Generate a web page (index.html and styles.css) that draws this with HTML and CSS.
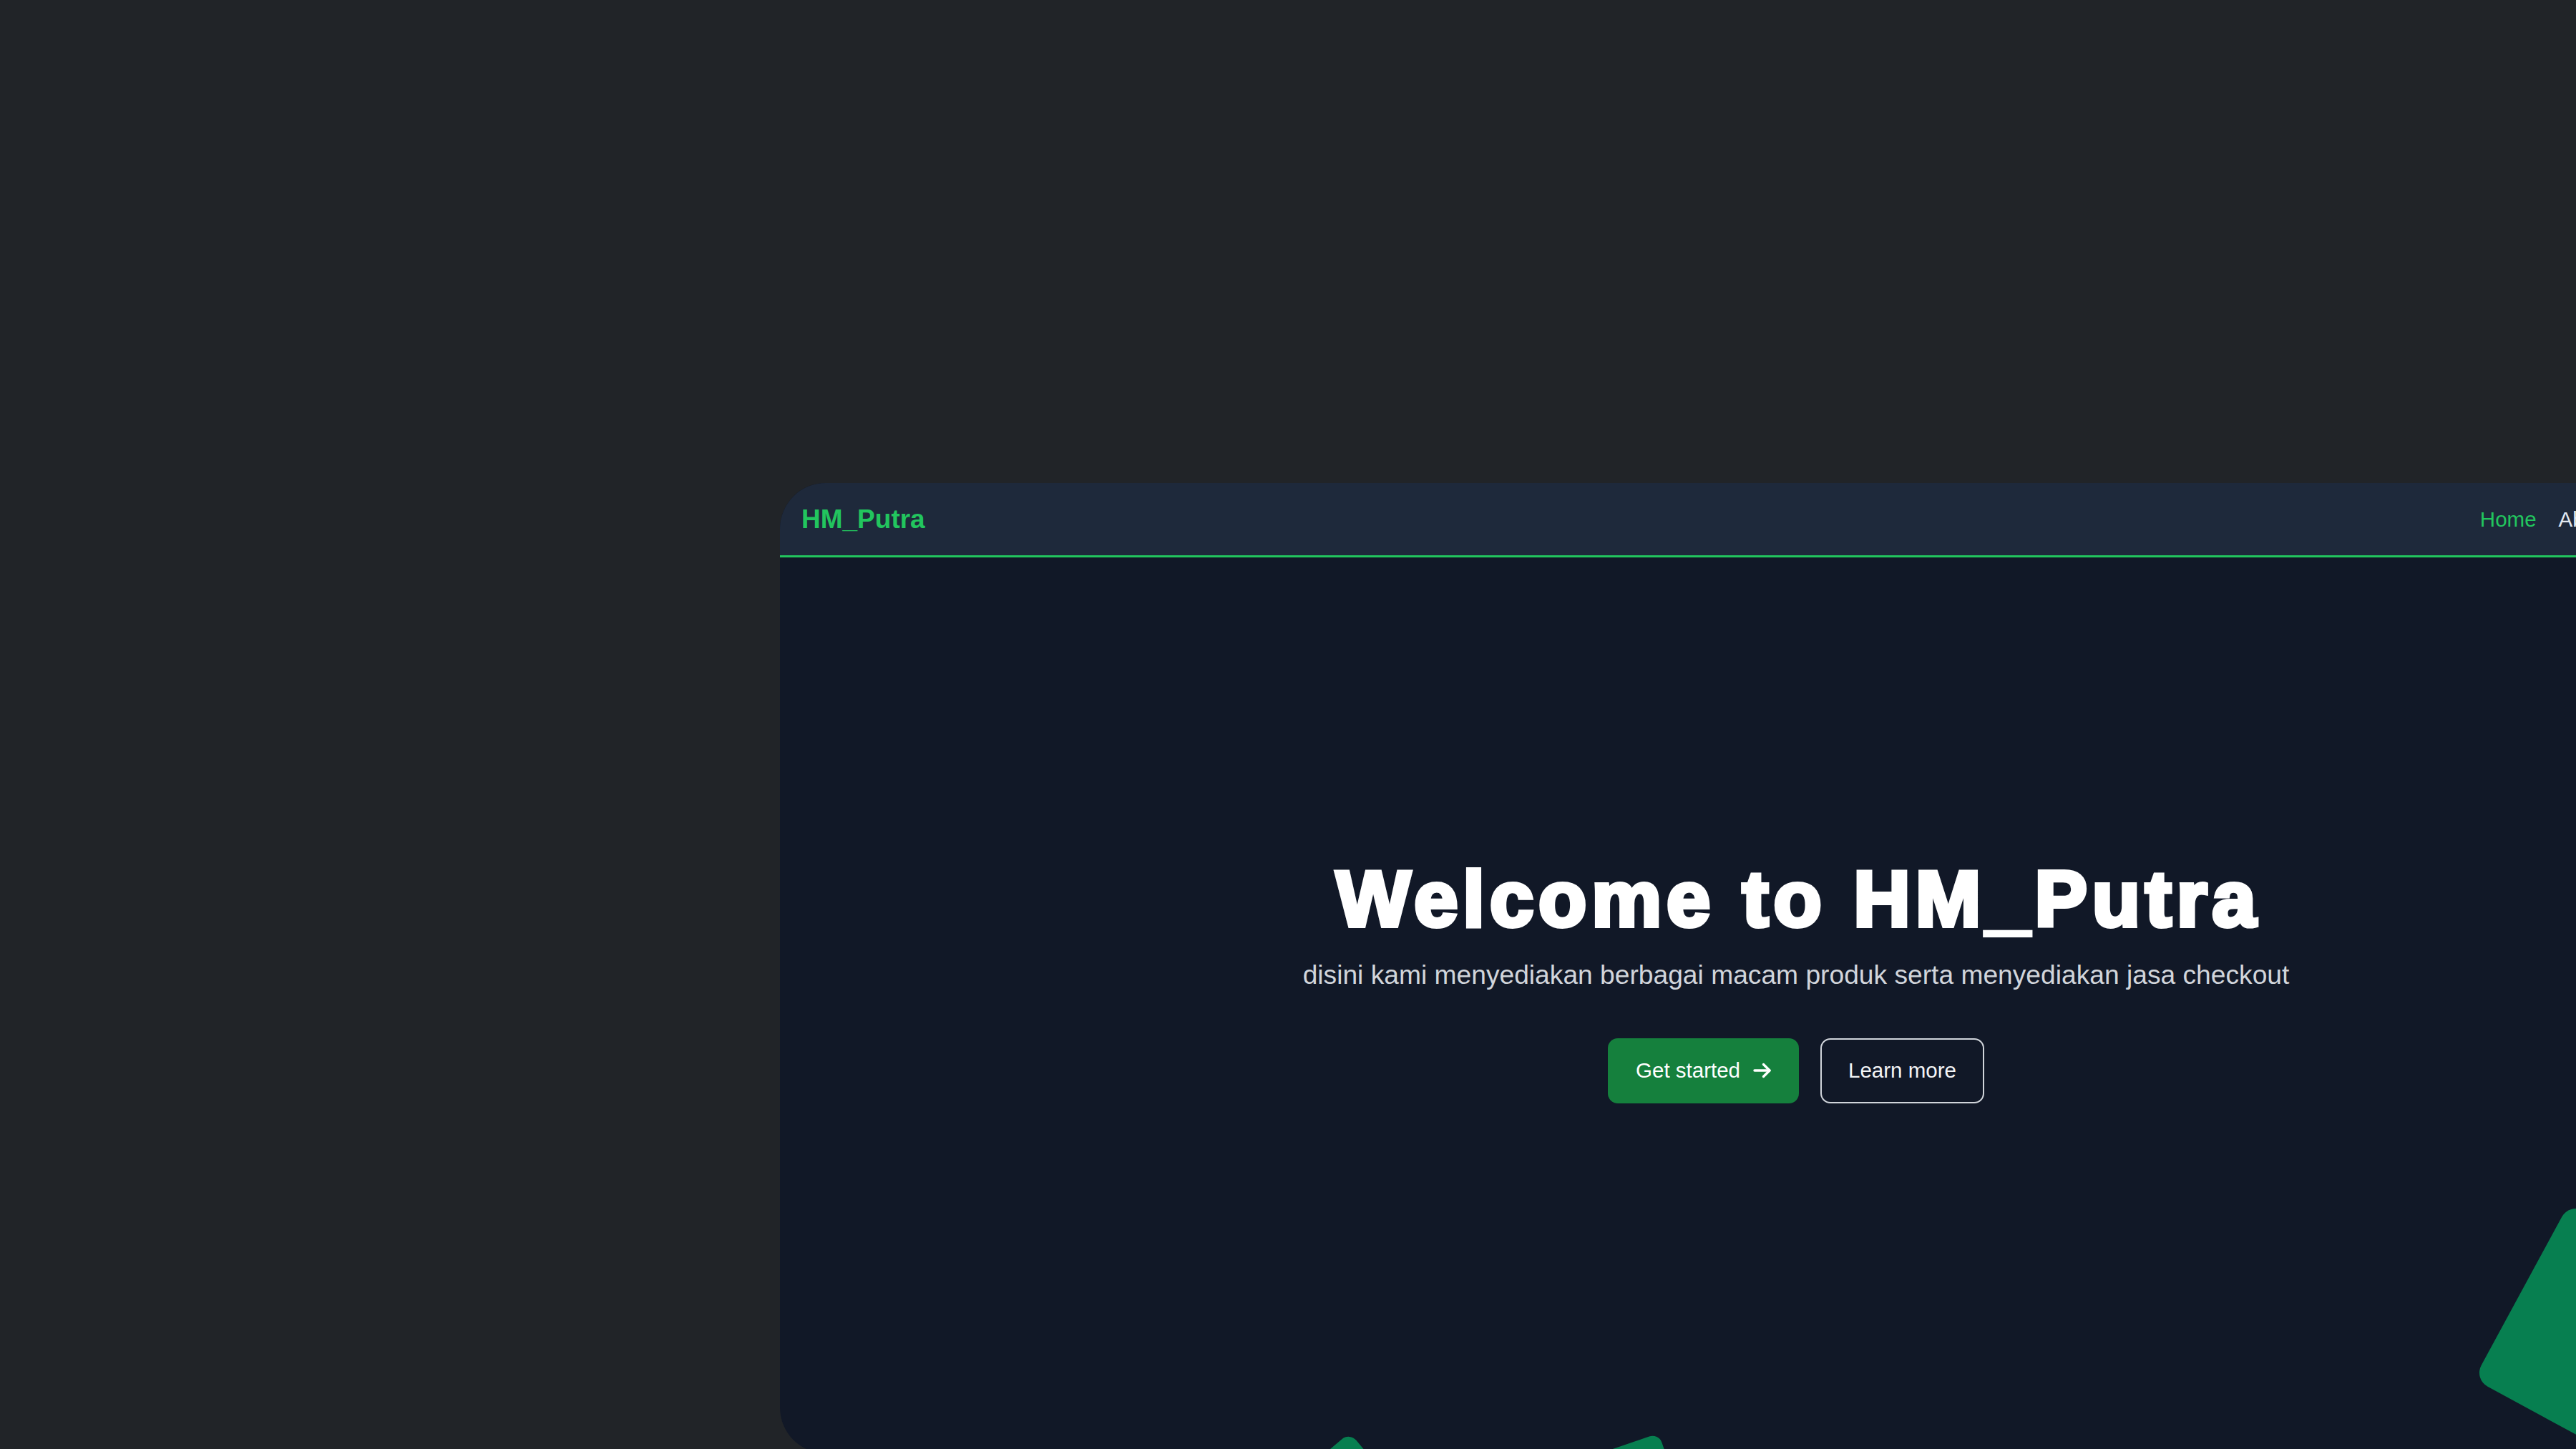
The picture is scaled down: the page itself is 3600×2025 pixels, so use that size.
FILE: index.html
```html
<!DOCTYPE html>
<html lang="id">
<head>
<meta charset="utf-8">
<title>HM_Putra</title>
<link rel="stylesheet" href="styles.css">
</head>
<body>
<div class="stage">
  <div class="card">
    <nav class="nav">
      <a class="logo" href="#">HM_Putra</a>
      <ul class="menu">
        <li class="menu-item active">Home</li>
        <li class="menu-item">About</li>
        <li class="menu-item">Product</li>
        <li class="menu-item">Contact</li>
      </ul>
    </nav>
    <section class="hero">
      <h1 class="hero-title">Welcome to HM_Putra</h1>
      <p class="hero-sub">disini kami menyediakan berbagai macam produk serta menyediakan jasa checkout</p>
      <div class="actions">
        <a class="btn btn-primary" href="#">Get started
          <svg class="arrow" width="26" height="22" viewBox="0 0 26 22" fill="none" stroke="currentColor" stroke-width="3.4" stroke-linecap="round" stroke-linejoin="round"><path d="M2 11H23"/><path d="M14.5 2.5L23 11L14.5 19.5"/></svg>
        </a>
        <a class="btn btn-outline" href="#">Learn more</a>
      </div>
    </section>
    <span class="shape shape-left"></span>
    <span class="shape shape-mid"></span>
    <span class="shape shape-right"></span>
  </div>
</div>
</body>
</html>
```

FILE: styles.css
```css
html, body {
  margin: 0;
  padding: 0;
  height: 100%;
  overflow: hidden;
  background: #212428;
}

.stage {
  padding: 675px 0 0 1090px;
}

.card {
  position: relative;
  width: 2840px;
  height: 1356px;
  border-radius: 64px;
  background: #111827;
  overflow: hidden;
  display: flex;
  flex-direction: column;
  font-family: "Liberation Sans", Arial, sans-serif;
}

.nav {
  flex-shrink: 0;
  height: 101px;
  background: #1e293b;
  border-bottom: 3px solid #22c55e;
  display: flex;
  align-items: center;
  justify-content: space-between;
  padding: 0 12px 0 30px;
}

.logo {
  color: #22c55e;
  font-weight: 700;
  font-size: 37px;
  text-decoration: none;
}

.menu {
  list-style: none;
  margin: 0;
  padding: 0;
  display: flex;
  gap: 31px;
}

.menu-item {
  font-size: 29.5px;
  color: #e2e8f0;
}

.menu-item.active {
  color: #22c55e;
}

.hero {
  flex: 1;
  display: flex;
  flex-direction: column;
  align-items: center;
  padding-top: 422px;
}

.hero-title {
  margin: 0;
  font-size: 110px;
  line-height: 110px;
  font-weight: 700;
  color: #ffffff;
  letter-spacing: 7px;
  padding-left: 7px;
  -webkit-text-stroke: 6px #ffffff;
}

.hero-sub {
  margin: 24px 0 0;
  font-size: 37.2px;
  line-height: 55.5px;
  color: #d1d5db;
}

.actions {
  margin-top: 60px;
  display: flex;
  gap: 30px;
}

.btn {
  box-sizing: border-box;
  height: 91px;
  display: inline-flex;
  align-items: center;
  font-size: 29.5px;
  border-radius: 14px;
  text-decoration: none;
}

.btn-primary {
  padding: 0 38px 0 39px;
  gap: 18px;
  background: #15803d;
  color: #ffffff;
}

.arrow {
  display: block;
}

.btn-outline {
  padding: 0 37px;
  border: 2px solid #d1d5db;
  color: #f3f4f6;
}

.shape {
  position: absolute;
  background: #077f50;
}

.shape-right {
  left: 2417px;
  top: 1056px;
  width: 280px;
  height: 280px;
  border-radius: 22px;
  transform: rotate(28.5deg);
}

.shape-left {
  left: 684px;
  top: 1368px;
  width: 200px;
  height: 200px;
  border-radius: 14px;
  transform: rotate(50deg);
}

.shape-mid {
  left: 1066px;
  top: 1355px;
  width: 200px;
  height: 200px;
  border-radius: 14px;
  transform: rotate(71deg);
}
```
